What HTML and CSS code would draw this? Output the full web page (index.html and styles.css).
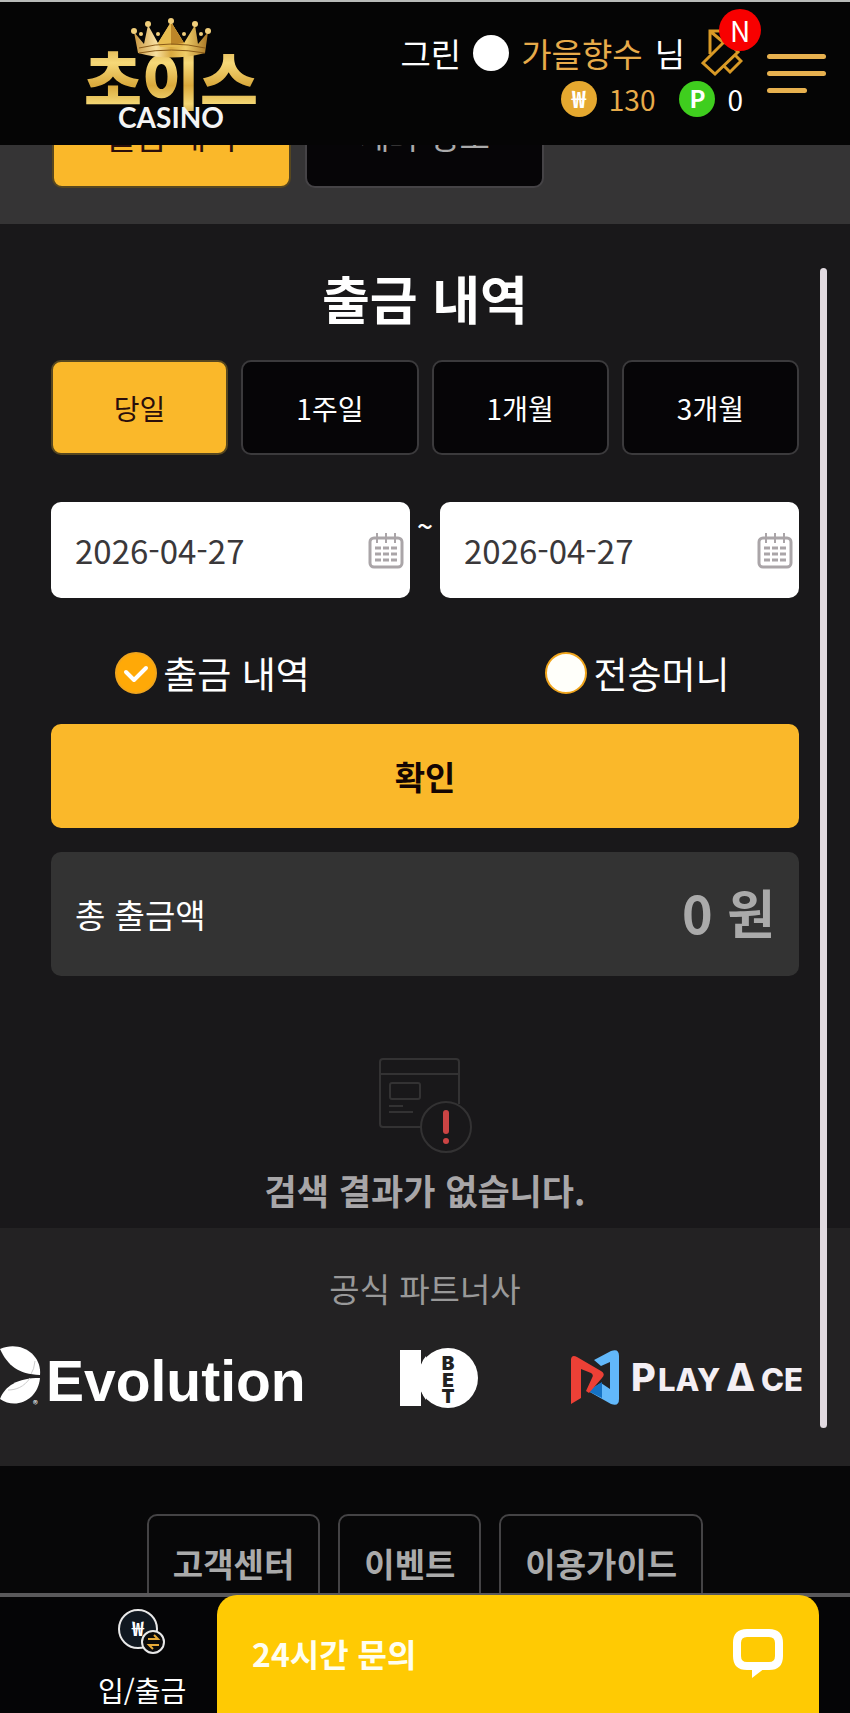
FILE: index.html
```html
<!DOCTYPE html>
<html lang="ko">
  <head>
    <meta charset="utf-8" />
    <meta name="viewport" content="width=device-width, initial-scale=1.0">
    <title>출금 내역</title>
    <link rel="stylesheet" href="styles.css">
  </head>
  <body>
    <header class="header">
      <a href="#" class="logo" aria-label="초이스 CASINO">
        <svg width="184" height="122" viewBox="80 10 184 122">
          <defs>
            <linearGradient id="gold" x1="0" y1="0" x2="0" y2="1">
              <stop offset="0" stop-color="#c9932e" />
              <stop offset="0.35" stop-color="#f6d878" />
              <stop offset="0.6" stop-color="#d9a93c" />
              <stop offset="0.8" stop-color="#f3d673" />
              <stop offset="1" stop-color="#b57e22" />
            </linearGradient>
            <linearGradient id="crown" x1="0" y1="0" x2="1" y2="0">
              <stop offset="0" stop-color="#c99640" />
              <stop offset="0.3" stop-color="#f8e0a0" />
              <stop offset="0.5" stop-color="#d9a93e" />
              <stop offset="0.7" stop-color="#f0cd68" />
              <stop offset="1" stop-color="#a87524" />
            </linearGradient>
          </defs>
          <text x="84" y="101" class="logo_name" fill="url(#gold)">초이스</text>
          <path d="M138 50 L134 29 L144 41 L148 22 L158 40 L171 19 L184 40 L195 22 L198 41 L208 29 L205 50 Q171 59 138 50Z" fill="url(#crown)" />
          <path d="M158 40 L171 19 L184 40 L182 44 L160 44Z" fill="#e8bd50" />
          <path d="M171 19 L184 40 L171 42Z" fill="#bd8628" />
          <path d="M139 45 Q171 37 205 45 M139 50 Q171 44 205 50" fill="none" stroke="#8a5b18" stroke-width="1" />
          <g fill="#f1cf7c">
            <circle cx="134" cy="28" r="3" /><circle cx="148" cy="21" r="3" /><circle cx="171" cy="18" r="3" />
            <circle cx="195" cy="21" r="3" /><circle cx="208" cy="28" r="3" />
            <circle cx="141" cy="31" r="2" /><circle cx="158" cy="31" r="2" /><circle cx="184" cy="31" r="2" /><circle cx="201" cy="31" r="2" />
          </g>
          <text x="171" y="125" text-anchor="middle" class="logo_sub" fill="#f4f4f4">CASINO</text>
        </svg>
      </a>
      <div class="user">
        <div class="user_row">
          <span>그린</span>
          <span class="ball"></span>
          <span class="gold">가을향수</span>
          <span>님</span>
          <a href="#" class="note" aria-label="쪽지">
            <svg width="42" height="48" viewBox="0 0 42 48" fill="none" stroke="#d99a26" stroke-width="3">
              <path d="M9 25 V2 H27 L23 15 M9 2 L22 13" />
              <path d="M2 34 L25 11 L37 23 L14 45Z" />
              <path d="M23 37 L29 43 L40 32 L34 26" />
            </svg>
            <span class="badge">N</span>
          </a>
        </div>
        <div class="user_row money">
          <span class="coin coin_won">₩</span>
          <span class="gold">130</span>
          <span class="coin coin_point">P</span>
          <span>0</span>
        </div>
      </div>
      <button class="menu" aria-label="메뉴"><i></i><i></i><i></i></button>
    </header>

    <main>
      <nav class="tabs">
        <button class="tab active">출금 내역</button>
        <button class="tab">계좌 정보</button>
      </nav>

      <section class="history">
        <h1>출금 내역</h1>
        <div class="period">
          <button class="active">당일</button>
          <button>1주일</button>
          <button>1개월</button>
          <button>3개월</button>
        </div>
        <div class="dates">
          <label class="date">
            <input type="text" value="2026-04-27" aria-label="시작일">
            <svg class="calendar" width="36" height="36" viewBox="0 0 36 36" fill="none" stroke="#aaa5a8" stroke-width="3">
              <rect x="2" y="5" width="32" height="29" rx="4" />
              <path d="M9 0V10M18 0V10M27 0V10" stroke-width="2" />
              <path d="M7 15H29M7 21H29M7 27H29" stroke-dasharray="6 2" />
            </svg>
          </label>
          <span class="tilde">~</span>
          <label class="date">
            <input type="text" value="2026-04-27" aria-label="종료일">
            <svg class="calendar" width="36" height="36" viewBox="0 0 36 36" fill="none" stroke="#aaa5a8" stroke-width="3">
              <rect x="2" y="5" width="32" height="29" rx="4" />
              <path d="M9 0V10M18 0V10M27 0V10" stroke-width="2" />
              <path d="M7 15H29M7 21H29M7 27H29" stroke-dasharray="6 2" />
            </svg>
          </label>
        </div>
        <div class="kinds">
          <label class="kind">
            <input type="radio" name="kind" checked>
            <svg class="check" width="42" height="42" viewBox="0 0 42 42" fill="none" stroke="#fff" stroke-width="4" stroke-linecap="round" stroke-linejoin="round">
              <path d="M11 20 L19 28 L31 16" />
            </svg>
            출금 내역
          </label>
          <label class="kind">
            <input type="radio" name="kind">
            전송머니
          </label>
        </div>
        <button class="confirm">확인</button>
        <div class="total">
          <span>총 출금액</span>
          <strong>0 원</strong>
        </div>
        <div class="empty">
          <svg width="94" height="96" viewBox="0 0 94 96" fill="none" stroke="#333233" stroke-width="2">
            <path d="M43 69 H5 Q2 69 2 66 V4 Q2 1 5 1 H78 Q81 1 81 4 V46 M2 16 H81" />
            <rect x="12" y="25" width="30" height="16" rx="2" />
            <path d="M11 48H25M11 54H35" />
            <circle cx="68" cy="69" r="25" />
            <path d="M68 55V73" stroke="#cc4444" stroke-width="6" stroke-linecap="round" />
            <circle cx="68" cy="83" r="3" fill="#cc4444" stroke="none" />
          </svg>
          <p>검색 결과가 없습니다.</p>
        </div>
      </section>

      <section class="partners">
        <h2>공식 파트너사</h2>
        <div class="partner_list">
          <svg width="308" height="74" viewBox="0 0 308 74" fill="#fff">
            <path d="M0 5 C20 -4 42 10 40 31 C18 30 8 22 0 5Z" />
            <path d="M40 34 C38 56 16 66 0 55 C5 42 17 34 40 34Z" />
            <path d="M30 34 C24 43 16 46 8 46 M35 17 Q34 26 31 30" fill="none" stroke="#ccc" stroke-width="1" />
            <text x="33" y="64" class="reg">®</text>
            <text x="46" y="57" class="evolution">Evolution</text>
          </svg>
          <svg width="80" height="64" viewBox="0 0 80 64">
            <path d="M0 6 H21 V21 Q23 15 26 12 V56 Q23 52 21 47 V62 H0Z" fill="#fff" />
            <circle cx="48" cy="34" r="30" fill="#fff" />
            <text text-anchor="middle" class="bet" fill="#222"><tspan x="48" y="26">B</tspan><tspan x="48" y="43">E</tspan><tspan x="48" y="59">T</tspan></text>
          </svg>
          <svg width="237" height="64" viewBox="0 0 237 64">
            <path d="M23 11 L40 2 Q48 -1 48 7 V50 Q48 58 40 55 L17 42 L30 34 L39 40 V13 L30 17Z" transform="translate(0 5)" fill="#62b8fa" />
            <path d="M17 47 L31 38 V54Z" fill="#1572c4" />
            <path d="M0 15 Q1 10 6 13 L30 27 Q35 30 31 34 L18 49 L15 47 L21 34 Q23 31 20 29 L10 25 V54 L0 60Z" fill="#ec4036" />
            <text y="47" class="playace" fill="#f4eff4"><tspan x="60" class="big">P</tspan><tspan x="87">LAY</tspan><tspan x="155" class="big">Δ</tspan><tspan x="190">CE</tspan></text>
          </svg>
        </div>
      </section>
    </main>

    <footer class="footer">
      <a href="#">고객센터</a>
      <a href="#">이벤트</a>
      <a href="#">이용가이드</a>
    </footer>

    <div class="scroll_thumb"></div>

    <nav class="bottom">
      <a href="#" class="bottom_item">
        <svg width="48" height="46" viewBox="0 0 48 46">
          <circle cx="20" cy="20" r="19" fill="#101820" stroke="#e8e8e8" stroke-width="2" />
          <text x="20" y="27" text-anchor="middle" class="bottom_won" fill="#fff">₩</text>
          <circle cx="35" cy="33" r="11" fill="#0a0a0a" stroke="#e8e8e8" stroke-width="2" />
          <path d="M30 30H40L36 26M41 36H31L35 40" fill="none" stroke="#e7aa37" stroke-width="2" />
        </svg>
        <span>입/출금</span>
      </a>
    </nav>
    <button class="chat">
      <span>24시간 문의</span>
      <svg width="50" height="49" viewBox="0 0 50 49">
        <path d="M14 4 H36 Q46 4 46 14 V27 Q46 37 36 37 H14 Q4 37 4 27 V14 Q4 4 14 4Z" fill="none" stroke="#fff" stroke-width="8" />
        <path d="M19 33 H32 V39 L19 49Z" fill="#fff" />
      </svg>
    </button>
  </body>
</html>
```
FILE: styles.css
```css
* {
  box-sizing: border-box;
}

body {
  margin: 0;
  min-height: 100vh;
  display: flex;
  flex-direction: column;
  overflow-x: hidden;
  background: #070708;
  color: #fff;
  font-family: "Noto Sans CJK KR", "Noto Sans", sans-serif;
  font-size: 33px;
}

button, input {
  font-family: inherit;
  font-size: inherit;
  color: inherit;
}

button {
  padding: 0;
  cursor: pointer;
}

a {
  color: inherit;
  text-decoration: none;
}

svg {
  display: block;
  flex-shrink: 0;
}

/* header */
.header {
  position: fixed;
  top: 0;
  left: 0;
  right: 0;
  z-index: 10;
  height: 145px;
  padding: 0 24px 0 80px;
  display: flex;
  align-items: center;
  background: #050505;
  border-top: 2px solid #b9bbb8;
}

.logo_name {
  font-size: 63px;
  font-weight: 900;
}

.logo_sub {
  font-family: Lato, sans-serif;
  font-size: 28px;
  font-weight: 700;
}

.user {
  margin-left: auto;
  margin-right: 24px;
  padding-top: 4px;
}

.user_row {
  display: flex;
  align-items: center;
  justify-content: flex-end;
  height: 46px;
  gap: 12px;
  line-height: 44px;
}

.ball {
  width: 36px;
  height: 36px;
  border-radius: 50%;
  background: #fff;
}

.gold {
  color: #e7ab4a;
}

.note {
  position: relative;
  margin-left: 4px;
}

.badge {
  position: absolute;
  top: -20px;
  right: -18px;
  width: 42px;
  height: 42px;
  border-radius: 50%;
  background: #f80000;
  font-size: 28px;
  line-height: 42px;
  text-align: center;
}

.money {
  font-size: 28px;
}

.coin {
  width: 36px;
  height: 36px;
  border-radius: 50%;
  font-size: 24px;
  font-weight: 700;
  line-height: 34px;
  text-align: center;
}

.coin_won {
  background: #e5a82f;
}

.coin_point {
  margin-left: 12px;
  background: #3fce1e;
}

.menu {
  width: 59px;
  display: flex;
  flex-direction: column;
  gap: 12px;
  border: none;
  background: none;
}

.menu i {
  width: 100%;
  height: 5px;
  border-radius: 3px;
  background: #e7b14f;
}

.menu i:last-child {
  width: 40px;
}

/* tabs */
.tabs {
  display: flex;
  gap: 14px;
  padding: 90px 52px 36px;
  background: #353435;
}

.tab {
  width: 239px;
  height: 98px;
  padding-bottom: 8px;
  border: 2px solid #454346;
  border-radius: 10px;
  background: #060507;
  color: #aaa;
}

.tab.active, .period .active {
  background: #fab82a;
  border-color: #57471f;
  color: #2a0e0b;
}

/* history */
.history {
  padding: 36px 51px 12px;
  background: #19181a;
}

h1 {
  margin: 0 0 24px;
  font-size: 52px;
  line-height: 76px;
  text-align: center;
}

.period {
  display: grid;
  grid-template-columns: repeat(4, 1fr);
  gap: 13px;
  font-size: 28px;
}

.period button {
  height: 95px;
  border: 2px solid #3b3a3c;
  border-radius: 10px;
  background: #060507;
}

.dates {
  display: flex;
  margin-top: 47px;
}

.date {
  position: relative;
  flex: 1;
}

.date input {
  display: block;
  width: 100%;
  height: 96px;
  padding: 0 24px;
  border: none;
  border-radius: 10px;
  background: #fff;
  color: #3a383a;
}

.calendar {
  position: absolute;
  top: 31px;
  right: 6px;
}

.tilde {
  width: 30px;
  font-size: 28px;
  font-weight: 500;
  line-height: 46px;
  text-align: center;
}

.kinds {
  display: grid;
  grid-template-columns: 1fr 1fr;
  margin: 46px -51px 22px;
  font-size: 37px;
  line-height: 58px;
}

.kind {
  position: relative;
  display: flex;
  align-items: center;
  justify-content: center;
  gap: 6px;
}

.kind input {
  appearance: none;
  width: 42px;
  height: 42px;
  margin: 0;
  border: 2px solid #f0a51d;
  border-radius: 50%;
  background: #fffffa;
}

.kind input:checked {
  background: #ffa907;
}

.check {
  margin-left: -48px;
}

.confirm {
  display: block;
  width: 100%;
  height: 104px;
  border: none;
  border-radius: 10px;
  background: #fab82a;
  color: #140503;
  font-weight: 700;
}

.total {
  display: flex;
  align-items: center;
  justify-content: space-between;
  height: 124px;
  margin-top: 24px;
  padding: 0 24px;
  border-radius: 10px;
  background: #333;
}

.total strong {
  color: #aaa;
  font-size: 52px;
  line-height: 76px;
  padding-bottom: 4px;
}

.empty {
  display: flex;
  flex-direction: column;
  align-items: center;
  margin-top: 82px;
  color: #a8a6a8;
  font-size: 35px;
  font-weight: 700;
}

.empty p {
  margin: 10px 0 0;
  line-height: 52px;
}

/* partners */
.partners {
  height: 238px;
  padding-top: 36px;
  background: #232223;
}

.partners h2 {
  margin: 0 0 32px;
  color: #999;
  font-size: 33px;
  font-weight: 400;
  line-height: 48px;
  text-align: center;
}

.partner_list {
  display: flex;
  align-items: flex-start;
  justify-content: space-between;
  padding-right: 42px;
}

.evolution {
  font-family: "Liberation Sans", sans-serif;
  font-size: 57px;
  font-weight: 700;
}

.reg {
  font-size: 10px;
}

.bet {
  font-family: Inter, sans-serif;
  font-size: 19px;
  font-weight: 900;
}

.playace {
  font-family: Inter, sans-serif;
  font-size: 31px;
  font-weight: 800;
}

.playace .big {
  font-size: 38px;
}

/* footer */
.footer {
  flex: 1;
  display: flex;
  justify-content: center;
  align-items: flex-start;
  gap: 18px;
  padding-top: 48px;
}

.footer a {
  height: 98px;
  padding: 0 24px;
  border: 2px solid #444345;
  border-radius: 10px;
  color: #aaa;
  font-weight: 700;
  line-height: 94px;
}

.scroll_thumb {
  position: fixed;
  top: 268px;
  bottom: 285px;
  right: 23px;
  width: 7px;
  border-radius: 4px;
  background: #e1dae0;
}

/* bottom bar */
.bottom {
  position: fixed;
  left: 0;
  right: 0;
  bottom: 0;
  height: 120px;
  padding-left: 98px;
  display: flex;
  border-top: 4px solid #5a595b;
  background: #050506;
}

.bottom_item {
  display: flex;
  flex-direction: column;
  align-items: center;
  gap: 14px;
  padding-top: 12px;
  font-size: 28px;
  line-height: 42px;
}

.bottom_won {
  font-size: 20px;
  font-weight: 700;
}

.chat {
  position: fixed;
  left: 217px;
  right: 31px;
  bottom: 0;
  height: 118px;
  padding: 0 36px 2px 35px;
  display: flex;
  align-items: center;
  justify-content: space-between;
  border: none;
  border-radius: 20px 20px 0 0;
  background: #ffca03;
  color: #fffef0;
  font-size: 32px;
  font-weight: 700;
}
```
